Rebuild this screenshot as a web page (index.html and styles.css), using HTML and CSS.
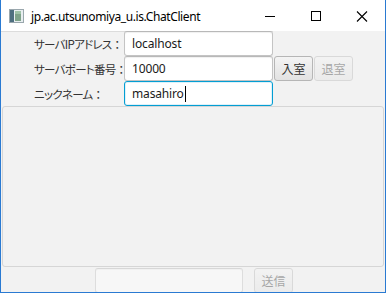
FILE: index.html
```html
<!DOCTYPE html>
<html>
<head>
<meta charset="utf-8">
<link rel="stylesheet" href="styles.css">
</head>
<body>
<div class="win">
  <div class="titlebar">
    <svg class="appicon" width="15" height="14" viewBox="0 0 15 14">
      <rect x="0.5" y="0.5" width="14" height="13" fill="#e8eef0" stroke="#9aa7ad"/>
      <rect x="1" y="1" width="4" height="12" fill="#4f6f80"/>
      <rect x="6" y="2" width="6" height="10" fill="#7fa38a"/>
      <rect x="6" y="2" width="6" height="3" fill="#9fc3a8"/>
    </svg>
    <span class="title">jp.ac.utsunomiya_u.is.ChatClient</span>
    <div class="controls">
      <svg class="ctl" width="46" height="30" viewBox="0 0 46 30"><rect x="18" y="15" width="10" height="1" fill="#000"/></svg>
      <svg class="ctl" width="46" height="30" viewBox="0 0 46 30"><rect x="18.5" y="10.5" width="9" height="9" fill="none" stroke="#000"/></svg>
      <svg class="ctl" width="46" height="30" viewBox="0 0 46 30"><path d="M18 10.5 L28 20.5 M28 10.5 L18 20.5" stroke="#000" stroke-width="1.1" fill="none"/></svg>
    </div>
  </div>
  <div class="content">
    <div class="form">
      <div class="row">
        <span class="lbl">サーバIPアドレス<span class="colon">：</span></span>
        <div class="tf">localhost</div>
      </div>
      <div class="row">
        <span class="lbl">サーバポート番号<span class="colon">：</span></span>
        <div class="tf">10000</div>
        <button class="btn">入室</button>
        <button class="btn" disabled>退室</button>
      </div>
      <div class="row">
        <span class="lbl">ニックネーム<span class="colon">：</span></span>
        <div class="tf focused">masahiro<span class="caret"></span></div>
      </div>
    </div>
    <div class="log"></div>
    <div class="bottom">
      <div class="tf send-tf disabled"></div>
      <button class="btn send" disabled>送信</button>
    </div>
  </div>
</div>
</body>
</html>
```

FILE: styles.css
```css
* { box-sizing: border-box; }
html, body { margin: 0; padding: 0; background: #fff; }
.win {
  width: 386px;
  height: 293px;
  border-left: 1px solid #2a7ad2;
  border-right: 1px solid #2a7ad2;
  border-bottom: 1px solid #2a7ad2;
  display: flex;
  flex-direction: column;
  overflow: hidden;
  font-family: "Noto Sans", "Noto Sans CJK JP", sans-serif;
}
.titlebar {
  height: 31px;
  flex: none;
  background: #fff;
  display: flex;
  align-items: center;
  padding-left: 8px;
}
.appicon { flex: none; margin-top: 1px; }
.title {
  margin-left: 7px;
  font-size: 12px;
  color: #000;
  letter-spacing: -0.4px;
  margin-top: 1px;
}
.controls {
  margin-left: auto;
  display: flex;
  align-items: center;
  height: 30px;
  margin-top: 1px;
}
.ctl { display: block; }
.content {
  flex: 1;
  background: #f2f2f2;
  display: flex;
  flex-direction: column;
  min-height: 0;
}
.form {
  display: flex;
  flex-direction: column;
  width: 272px;
  box-shadow: inset 0 1px 0 #dcdcdc;
}
.row {
  display: flex;
  align-items: center;
  height: 25px;
}
.lbl {
  width: 123px;
  flex: none;
  padding-left: 33px;
  font-family: "Noto Sans CJK JP", sans-serif;
  font-feature-settings: "palt";
  font-size: 11.5px;
  color: #333;
  white-space: nowrap;
  letter-spacing: -0.7px;
}
.colon {
  font-feature-settings: normal;
  letter-spacing: 0;
}
.tf {
  width: 149px;
  height: 25px;
  flex: none;
  background: #fff;
  border: 1px solid #c4c4c4;
  border-top-color: #b8b8b8;
  border-radius: 3px;
  box-shadow: inset 0 1px 1px #f0f0f0;
  font-size: 12px;
  color: #1a1a1a;
  padding-left: 7px;
  display: flex;
  align-items: center;
  letter-spacing: -0.15px;
  font-family: "Noto Sans", sans-serif;
}
.tf.focused {
  border: 1px solid #039ed3;
  box-shadow: inset 0 0 0 1px #dff1f9;
}
.caret {
  display: inline-block;
  width: 1px;
  height: 16px;
  background: #000;
  margin-left: 1px;
}
.btn {
  height: 25px;
  width: 39px;
  flex: none;
  margin: 0 0 0 1px;
  padding: 0;
  border: 1px solid #b6b6b6;
  border-radius: 3px;
  background: linear-gradient(#f4f4f4, #e2e2e2);
  font-family: "Noto Sans CJK JP", sans-serif;
  font-size: 12px;
  color: #333;
  white-space: nowrap;
}
.btn:disabled { opacity: 0.4; }
.log {
  margin: 0 1px;
  height: 161px;
  border: 1px solid #d6d6d6;
  border-radius: 3px;
  background: #f2f2f2;
  flex: none;
}
.bottom {
  display: flex;
  height: 25px;
  margin-top: 1px;
  padding-left: 94px;
  flex: none;
}
.send-tf { width: 148px; }
.tf.disabled {
  opacity: 0.45;
}
.btn.send { margin-left: 11px; }
```
